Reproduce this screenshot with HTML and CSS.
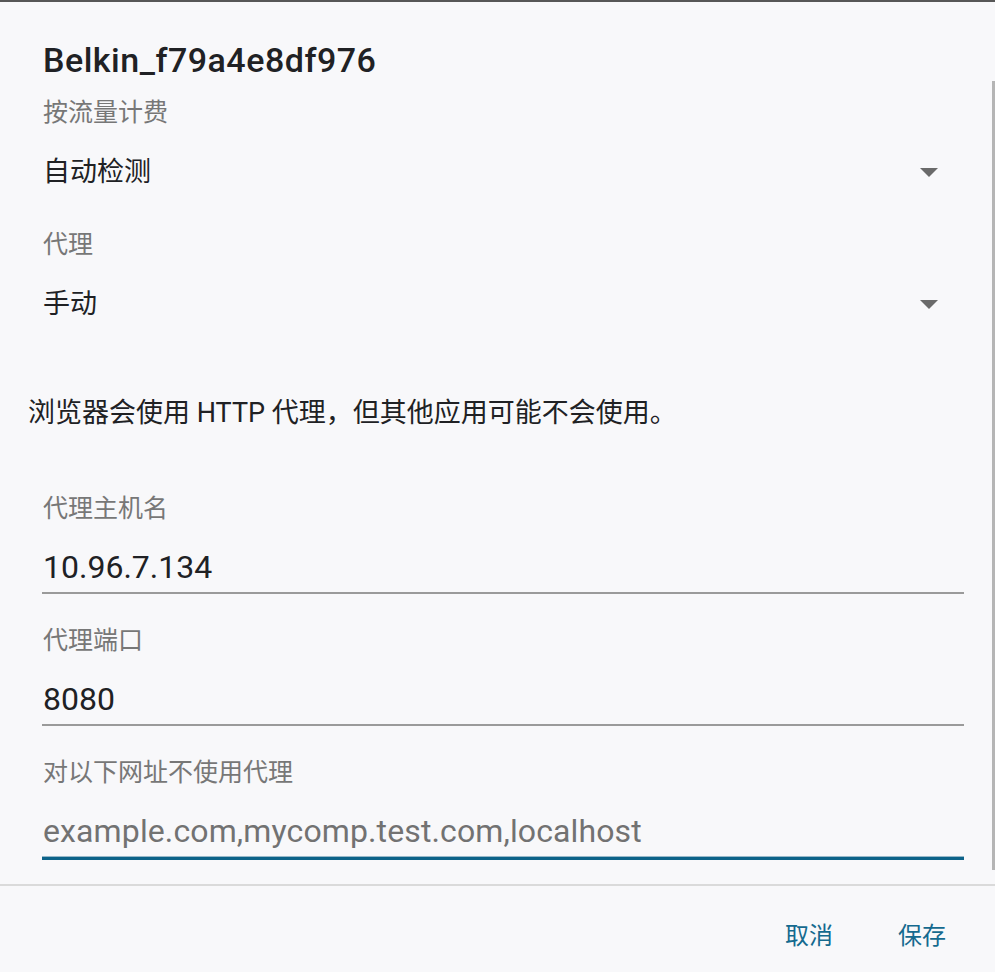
FILE: index.html
```html
<!DOCTYPE html>
<html lang="zh-CN">
<head>
<meta charset="utf-8">
<title>Belkin_f79a4e8df976</title>
<link rel="stylesheet" href="styles.css">
</head>
<body>
<div class="dialog">
  <h1 class="title">Belkin_f79a4e8df976</h1>
  <div class="content">
    <div class="select-field">
      <div class="label">按流量计费</div>
      <div class="select-row">
        <span class="value">自动检测</span>
        <svg class="arrow" width="18" height="9" viewBox="0 0 18 9"><polygon points="0,0 18,0 9,9" fill="#6a6a6a"/></svg>
      </div>
    </div>
    <div class="select-field">
      <div class="label">代理</div>
      <div class="select-row">
        <span class="value">手动</span>
        <svg class="arrow" width="18" height="9" viewBox="0 0 18 9"><polygon points="0,0 18,0 9,9" fill="#6a6a6a"/></svg>
      </div>
    </div>
    <p class="note">浏览器会使用 HTTP 代理，但其他应用可能不会使用。</p>
    <div class="input-field">
      <div class="label">代理主机名</div>
      <div class="input">10.96.7.134</div>
    </div>
    <div class="input-field">
      <div class="label">代理端口</div>
      <div class="input">8080</div>
    </div>
    <div class="input-field">
      <div class="label">对以下网址不使用代理</div>
      <div class="input focused placeholder">example.com,mycomp.test.com,localhost</div>
    </div>
  </div>
  <div class="footer">
    <button class="btn">取消</button>
    <button class="btn">保存</button>
  </div>
  <div class="scrollbar"></div>
</div>
</body>
</html>
```
FILE: styles.css
```css
html, body {
  margin: 0;
  padding: 0;
  background: #f8f8fa;
}
body {
  font-family: Roboto, "Noto Sans CJK SC", sans-serif;
  color: #202124;
}
.dialog {
  position: relative;
  height: 970px;
  border-top: 2px solid #575757;
  padding-top: 38px;
  box-sizing: border-box;
  overflow: hidden;
}
.title {
  margin: 0;
  padding-left: 43px;
  font-size: 34px;
  letter-spacing: 0.5px;
  line-height: 40px;
  font-weight: 500;
  color: #202124;
}
.content {
  padding: 0 31px 0 42px;
}
.label {
  font-size: 25px;
  line-height: 32px;
  color: #777777;
  padding-left: 1px;
}
.select-field {
  margin-top: 17px;
}
.select-field + .select-field {
  margin-top: 37px;
}
.select-row {
  margin-top: 23px;
  height: 40px;
  display: flex;
  align-items: center;
  justify-content: space-between;
  padding-left: 1px;
}
.value {
  font-size: 27px;
  line-height: 40px;
  color: #202124;
}
.arrow {
  display: block;
  margin-right: 26px;
}
.note {
  margin: 69px 0 0 -14px;
  font-size: 27px;
  line-height: 40px;
  color: #202124;
}
.input-field {
  margin-top: 31px;
}
.note + .input-field {
  margin-top: 60px;
}
.input {
  margin-top: 22px;
  font-size: 32px;
  line-height: 40px;
  padding-bottom: 5px;
  padding-left: 1px;
  border-bottom: 2px solid #9a9a9a;
  color: #202124;
}
.input.placeholder {
  color: #727272;
  letter-spacing: 0.12px;
}
.input.focused {
  padding-bottom: 6px;
  border-bottom: 3px solid #0d6389;
  box-shadow: inset 0 -1px 0 #98b8c9;
}
.footer {
  margin-top: 24px;
  border-top: 2px solid #dadada;
  padding: 34px 49px 0 0;
  display: flex;
  justify-content: flex-end;
  gap: 65px;
}
.btn {
  background: none;
  border: none;
  padding: 0;
  margin: 0;
  font-family: Roboto, "Noto Sans CJK SC", sans-serif;
  font-size: 24px;
  line-height: 32px;
  color: #156a8f;
  cursor: pointer;
}
.scrollbar {
  position: absolute;
  right: 0;
  top: 79px;
  width: 3px;
  height: 789px;
  background: #b5b5b5;
}
```
